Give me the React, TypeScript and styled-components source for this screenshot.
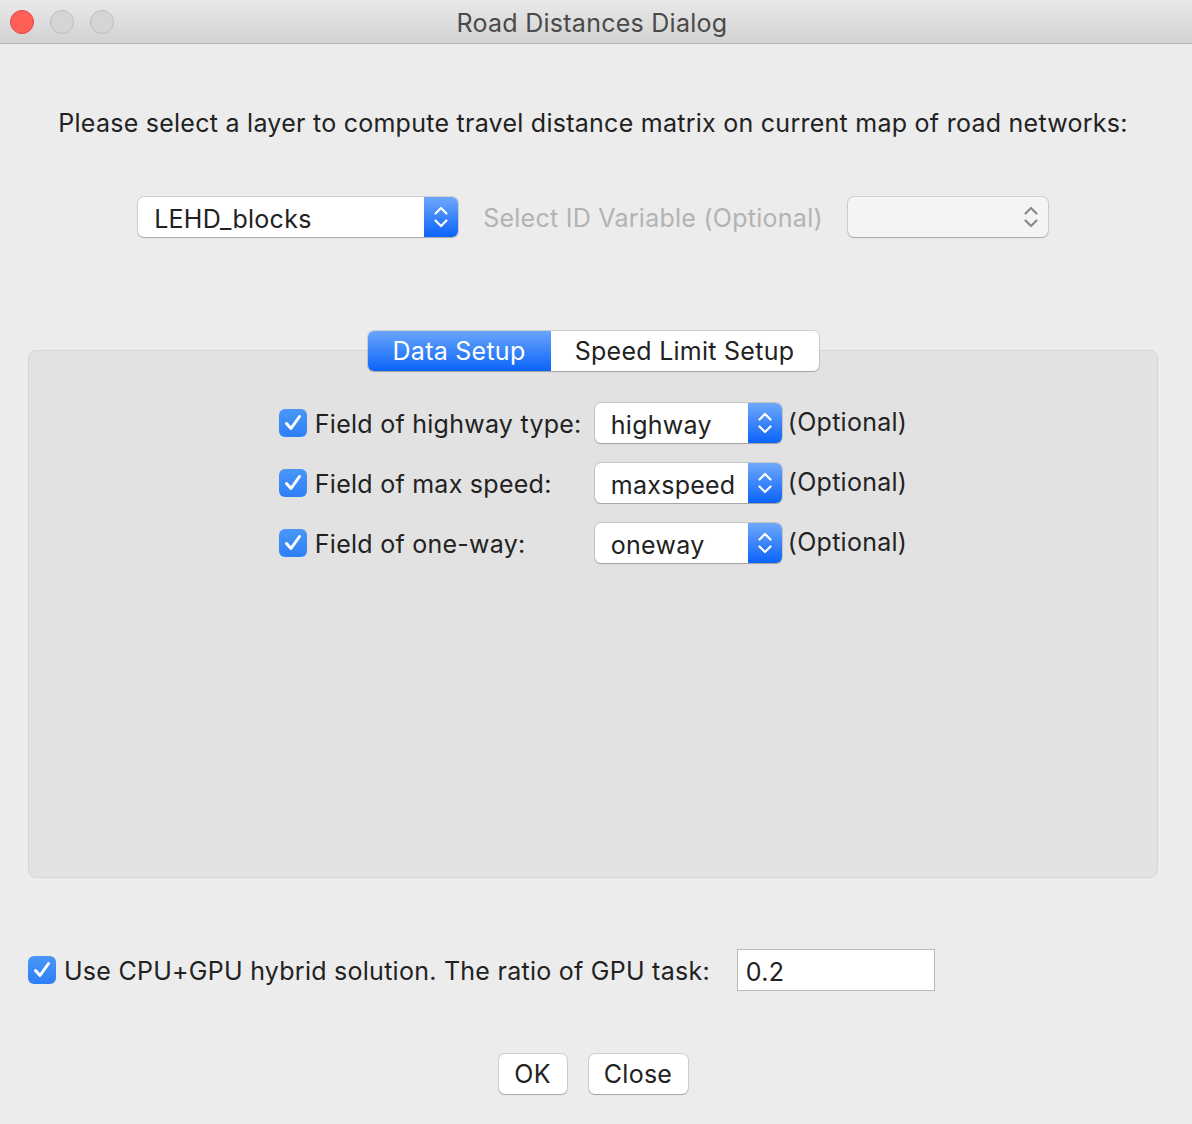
import React from "react";
import styled, { createGlobalStyle } from "styled-components";

const Global = createGlobalStyle`
  html, body { margin: 0; padding: 0; background: #ececec; }
  body { font-family: Inter, "Noto Sans", sans-serif; color: #222; letter-spacing: 0.26px; }
  * { box-sizing: border-box; }
`;

const Window = styled.div`
  width: 1192px;
  height: 1124px;
  background: #ececec;
  display: flex;
  flex-direction: column;
`;

const TitleBar = styled.div`
  height: 44px;
  flex: none;
  background: linear-gradient(#e9e9e9, #d2d2d2);
  border-bottom: 1px solid #b5b5b5;
  display: flex;
  align-items: center;
  position: relative;
`;

const Lights = styled.div`
  display: flex;
  gap: 16px;
  padding-left: 10px;
`;

const Light = styled.div<{ $red?: boolean }>`
  width: 24px;
  height: 24px;
  border-radius: 50%;
  background: ${(p) => (p.$red ? "#fe5f57" : "#d5d5d5")};
  border: 1px solid ${(p) => (p.$red ? "#e0443e" : "#bdbdbd")};
`;

const Title = styled.div`
  position: absolute;
  left: 0;
  right: 8px;
  top: 7px;
  text-align: center;
  font-size: 25px;
  line-height: 32px;
  color: #4a4a4a;
  pointer-events: none;
`;

const Body = styled.div`
  flex: 1;
  display: flex;
  flex-direction: column;
  align-items: center;
  padding: 0 34px 0 28px;
  font-size: 25px;
`;

const Heading = styled.div`
  margin-top: 63px;
  line-height: 32px;
  color: #222;
  white-space: nowrap;
`;

const LayerRow = styled.div`
  margin-top: 58px;
  display: flex;
  align-items: center;
  gap: 25px;
`;

const SelectBox = styled.div<{ $w: number; $disabled?: boolean }>`
  width: ${(p) => p.$w}px;
  height: 40px;
  border-radius: 6px;
  background: ${(p) => (p.$disabled ? "#f4f4f4" : "#fff")};
  box-shadow: 0 0 0 1px rgba(0, 0, 0, 0.12), 0 1px 1px rgba(0, 0, 0, 0.18);
  display: flex;
  align-items: center;
  overflow: hidden;
`;

const SelectText = styled.div`
  flex: 1;
  padding: 3px 0 0 16px;
  color: #222;
  white-space: nowrap;
`;

const Stepper = styled.div<{ $disabled?: boolean }>`
  width: 34px;
  height: 100%;
  flex: none;
  display: flex;
  align-items: center;
  justify-content: center;
  background: ${(p) =>
    p.$disabled ? "transparent" : "linear-gradient(#6ea8fb, #0a63f9)"};
`;

const DisabledLabel = styled.div`
  color: #b3b3b3;
  white-space: nowrap;
  padding-top: 2px;
`;

const TabArea = styled.div`
  margin-top: 94px;
  width: 1130px;
  display: flex;
  flex-direction: column;
  align-items: center;
`;

const Tabs = styled.div`
  display: flex;
  height: 40px;
  border-radius: 6px;
  overflow: hidden;
  box-shadow: 0 0 0 1px rgba(0, 0, 0, 0.12), 0 1px 1px rgba(0, 0, 0, 0.18);
  position: relative;
  z-index: 1;
`;

const Tab = styled.div<{ $active?: boolean; $w: number }>`
  width: ${(p) => p.$w}px;
  display: flex;
  align-items: center;
  justify-content: center;
  color: ${(p) => (p.$active ? "#fff" : "#222")};
  background: ${(p) => (p.$active ? "linear-gradient(#6aa6fb, #0a63f9)" : "#fff")};
  white-space: nowrap;
`;

const Panel = styled.div`
  margin-top: -21px;
  width: 1130px;
  height: 528px;
  background: #e2e2e2;
  border: 1px solid #d6d6d6;
  border-radius: 8px;
  display: flex;
  justify-content: center;
  padding-top: 52px;
`;

const FieldGrid = styled.div`
  display: grid;
  grid-template-columns: 316px 193px auto;
  grid-auto-rows: 40px;
  row-gap: 20px;
  align-items: center;
  align-content: start;
`;

const FieldLabel = styled.label`
  display: flex;
  align-items: center;
  gap: 8px;
  color: #222;
  white-space: nowrap;
`;

const LabelText = styled.span`
  padding-top: 2px;
`;

const Check = styled.span`
  width: 28px;
  height: 28px;
  flex: none;
  border-radius: 6px;
  background: linear-gradient(#4a97f8, #2d7ff5);
  display: flex;
  align-items: center;
  justify-content: center;
`;

const Optional = styled.div`
  color: #222;
  white-space: nowrap;
  margin-top: -2px;
`;

const GpuRow = styled.div`
  margin-top: 71px;
  align-self: stretch;
  display: flex;
  align-items: center;
  gap: 27px;
`;

const TextInput = styled.div`
  width: 198px;
  height: 42px;
  background: #fff;
  border: 1px solid #b9b9b9;
  display: flex;
  align-items: center;
  padding: 3px 0 0 8px;
  color: #222;
`;

const Buttons = styled.div`
  margin-top: 63px;
  display: flex;
  gap: 22px;
`;

const Button = styled.div<{ $w: number }>`
  width: ${(p) => p.$w}px;
  height: 40px;
  border-radius: 6px;
  background: #fff;
  box-shadow: 0 0 0 1px rgba(0, 0, 0, 0.12), 0 1px 1px rgba(0, 0, 0, 0.2);
  display: flex;
  align-items: center;
  justify-content: center;
  color: #222;
`;

const Chevrons = ({ color }: { color: string }) => (
  <svg width="16" height="28" viewBox="0 0 16 28">
    <path d="M2.5 10.5 L8 5 L13.5 10.5" fill="none" stroke={color} strokeWidth="2.2" strokeLinecap="round" strokeLinejoin="round" />
    <path d="M2.5 17.5 L8 23 L13.5 17.5" fill="none" stroke={color} strokeWidth="2.2" strokeLinecap="round" strokeLinejoin="round" />
  </svg>
);

const CheckMark = () => (
  <svg width="22" height="22" viewBox="0 0 22 22">
    <path d="M4.5 11.5 L9 16.5 L17.5 4.5" fill="none" stroke="#fff" strokeWidth="3" strokeLinecap="round" strokeLinejoin="round" />
  </svg>
);

const Select = ({ w, value }: { w: number; value: string }) => (
  <SelectBox $w={w}>
    <SelectText>{value}</SelectText>
    <Stepper>
      <Chevrons color="#fff" />
    </Stepper>
  </SelectBox>
);

const fields = [
  { label: "Field of highway type:", value: "highway" },
  { label: "Field of max speed:", value: "maxspeed" },
  { label: "Field of one-way:", value: "oneway" },
];

export default function App() {
  return (
    <Window>
      <Global />
      <TitleBar>
        <Lights>
          <Light $red />
          <Light />
          <Light />
        </Lights>
        <Title>Road Distances Dialog</Title>
      </TitleBar>
      <Body>
        <Heading>
          Please select a layer to compute travel distance matrix on current map of road networks:
        </Heading>
        <LayerRow>
          <Select w={320} value="LEHD_blocks" />
          <DisabledLabel>Select ID Variable (Optional)</DisabledLabel>
          <SelectBox $w={200} $disabled>
            <SelectText />
            <Stepper $disabled>
              <Chevrons color="#8a8a8a" />
            </Stepper>
          </SelectBox>
        </LayerRow>
        <TabArea>
          <Tabs>
            <Tab $active $w={183}>Data Setup</Tab>
            <Tab $w={268}>Speed Limit Setup</Tab>
          </Tabs>
          <Panel>
            <FieldGrid>
              {fields.map((f) => (
                <React.Fragment key={f.value}>
                  <FieldLabel>
                    <Check>
                      <CheckMark />
                    </Check>
                    <LabelText>{f.label}</LabelText>
                  </FieldLabel>
                  <Select w={187} value={f.value} />
                  <Optional>(Optional)</Optional>
                </React.Fragment>
              ))}
            </FieldGrid>
          </Panel>
        </TabArea>
        <GpuRow>
          <FieldLabel>
            <Check>
              <CheckMark />
            </Check>
            <LabelText>Use CPU+GPU hybrid solution. The ratio of GPU task:</LabelText>
          </FieldLabel>
          <TextInput>0.2</TextInput>
        </GpuRow>
        <Buttons>
          <Button $w={68}>OK</Button>
          <Button $w={99}>Close</Button>
        </Buttons>
      </Body>
    </Window>
  );
}
